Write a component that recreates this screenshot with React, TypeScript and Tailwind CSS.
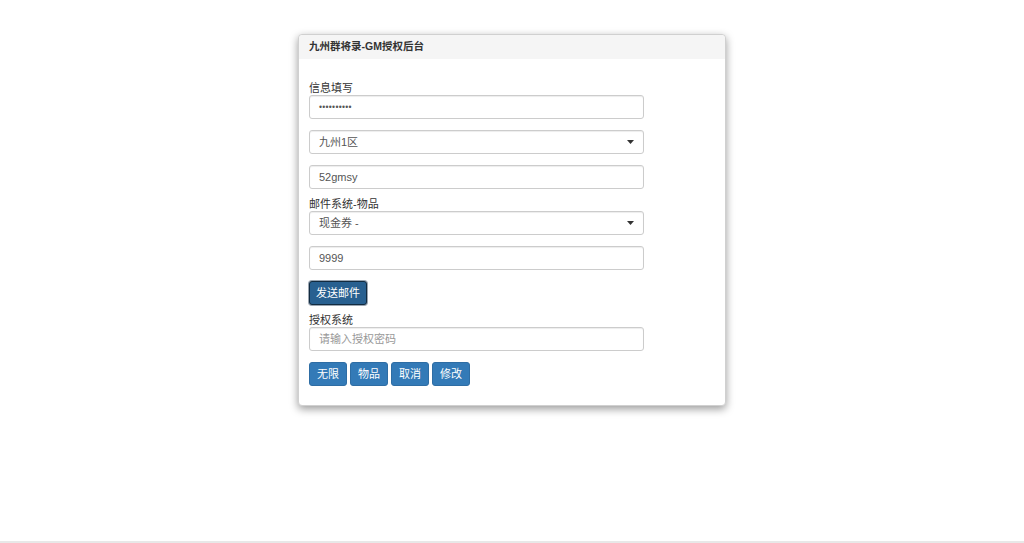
import { ReactNode } from 'react'

const font = { fontFamily: '"Liberation Sans", "Noto Sans CJK SC", sans-serif' }

function Label({ children, className = '' }: { children: ReactNode; className?: string }) {
  return <div className={`h-[14px] text-[11px] leading-[14px] text-[#333] ${className}`}>{children}</div>
}

function TextInput({ value, placeholder, dots }: { value?: string; placeholder?: string; dots?: boolean }) {
  return (
    <div className="flex h-[24px] w-[335px] items-center rounded-[3px] border border-[#ccc] bg-white px-[9px] text-[11px] shadow-[inset_0_1px_1px_rgba(0,0,0,0.075)]">
      {value ? (
        <span className={dots ? 'text-[8.5px] tracking-[0.3px] text-[#555]' : 'text-[#555]'}>{value}</span>
      ) : (
        <span className="text-[#999]">{placeholder}</span>
      )}
    </div>
  )
}

function SelectBox({ value }: { value: string }) {
  return (
    <div className="flex h-[24px] w-[335px] items-center justify-between rounded-[3px] border border-[#ccc] bg-white pl-[9px] pr-[9px] text-[11px] text-[#555] shadow-[inset_0_1px_1px_rgba(0,0,0,0.075)]">
      <span>{value}</span>
      <svg width="7" height="4" viewBox="0 0 7 4">
        <path d="M0 0h7L3.5 4z" fill="#333" />
      </svg>
    </div>
  )
}

function Btn({ children }: { children: ReactNode }) {
  return (
    <button className="flex h-[24px] w-[38px] items-center justify-center rounded-[3px] border border-[#2e6da4] bg-[#337ab7] text-[11px] text-white">
      {children}
    </button>
  )
}

export default function App() {
  return (
    <div className="flex h-[543px] flex-col bg-white" style={font}>
      <div className="flex flex-1 justify-center pt-[34px]">
        <div className="h-[372px] w-[428px] rounded-[4px] border border-[#d0d0d0] bg-white shadow-[0_3px_9px_rgba(0,0,0,0.4)]">
          <div className="flex h-[24px] items-center rounded-t-[4px] bg-[#f5f5f5] px-[10px] text-[10.5px] font-bold text-[#333]">
            九州群将录-GM授权后台
          </div>
          <div className="flex flex-col px-[10px] pt-[22px]">
            <Label>信息填写</Label>
            <TextInput value="••••••••••" dots />
            <div className="mt-[11px]">
              <SelectBox value="九州1区" />
            </div>
            <div className="mt-[11px]">
              <TextInput value="52gmsy" />
            </div>
            <Label className="mt-[8px]">邮件系统-物品</Label>
            <SelectBox value="现金券 -" />
            <div className="mt-[11px]">
              <TextInput value="9999" />
            </div>
            <div className="mt-[11px]">
              <button className="flex h-[24px] w-[58px] items-center justify-center rounded-[3px] border border-[#122b40] bg-[#286090] text-[11px] text-white shadow-[0_0_0_1px_#9aa5b1]">
                发送邮件
              </button>
            </div>
            <Label className="mt-[8px]">授权系统</Label>
            <TextInput placeholder="请输入授权密码" />
            <div className="mt-[11px] flex gap-[3px]">
              <Btn>无限</Btn>
              <Btn>物品</Btn>
              <Btn>取消</Btn>
              <Btn>修改</Btn>
            </div>
          </div>
        </div>
      </div>
      <div className="h-[2px] bg-[#e8e8e8]" />
    </div>
  )
}
